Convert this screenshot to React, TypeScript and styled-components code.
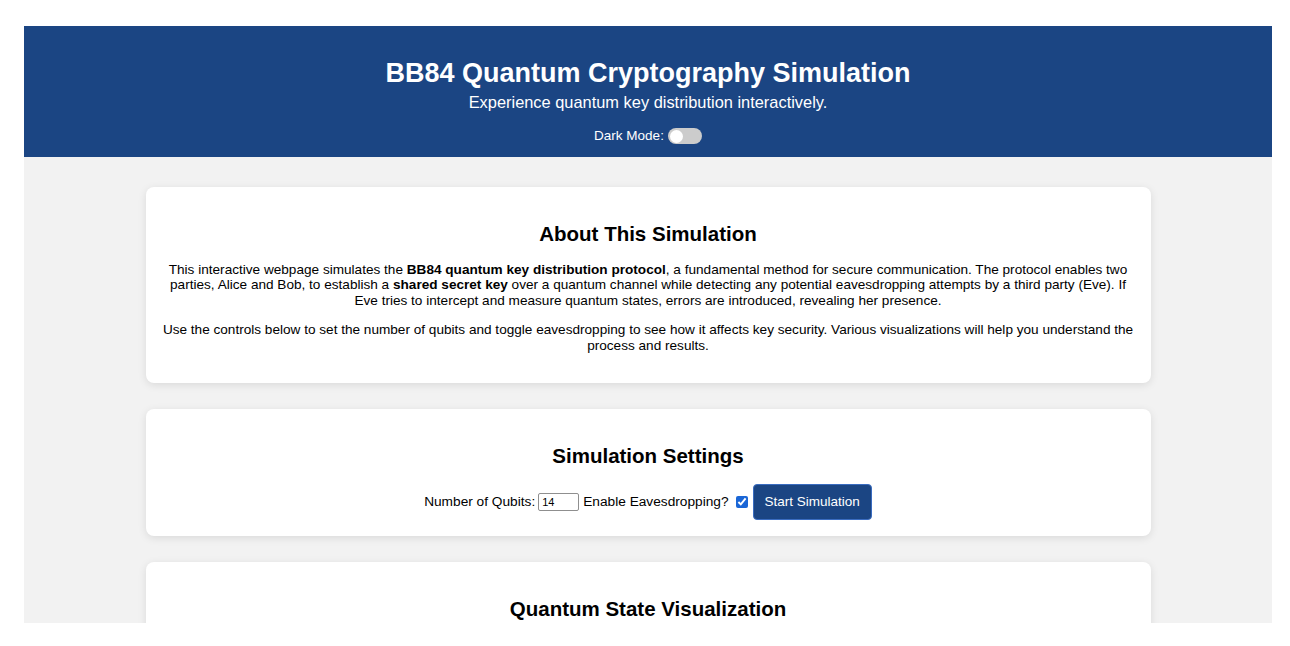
import React from "react";
import styled, { createGlobalStyle } from "styled-components";

const Global = createGlobalStyle`
  html, body { margin: 0; padding: 0; background: #ffffff; }
  body { font-family: "Liberation Sans", Arial, sans-serif; color: #000; }
`;

const Outer = styled.div`
  padding: 26px 18px 23px 24px;
  background: #fff;
`;

const Frame = styled.div`
  height: 597px;
  overflow: hidden;
  background: #f2f2f2;
  display: flex;
  flex-direction: column;
`;

const Header = styled.header`
  background: #1b4583;
  color: #fff;
  text-align: center;
  padding: 32px 0 12px;
  display: flex;
  flex-direction: column;
  align-items: center;
`;

const Title = styled.h1`
  margin: 0;
  font-size: 27px;
  line-height: 30px;
  font-weight: 700;
`;

const Subtitle = styled.p`
  margin: 5px 0 0;
  font-size: 16.4px;
  line-height: 18px;
`;

const ModeRow = styled.label`
  margin-top: 16px;
  display: flex;
  align-items: center;
  gap: 4px;
  font-size: 13.5px;
  line-height: 18px;
`;

const Toggle = styled.span`
  width: 34px;
  height: 16px;
  border-radius: 8px;
  background: #cccccc;
  display: flex;
  align-items: center;
  padding: 0 2px;
  box-sizing: border-box;
`;

const Knob = styled.span`
  width: 13px;
  height: 13px;
  border-radius: 50%;
  background: #fff;
`;

const Main = styled.main`
  padding: 30px 0 0;
  display: flex;
  flex-direction: column;
  align-items: center;
  gap: 26px;
`;

const Card = styled.section`
  width: 1005px;
  box-sizing: border-box;
  background: #fff;
  border-radius: 8px;
  box-shadow: 0 2px 8px rgba(0, 0, 0, 0.1);
  padding: 16px 16px;
  text-align: center;
`;

const CardTitle = styled.h2`
  margin: 19px 0 16px;
  font-size: 20.5px;
  line-height: 23.5px;
  font-weight: 700;
`;

const Para = styled.p`
  margin: 0 0 13.5px;
  font-size: 13.6px;
  line-height: 15.8px;
`;

const Controls = styled.div`
  margin-top: 1.5px;
  display: flex;
  justify-content: center;
  align-items: center;
  font-size: 13.7px;
  height: 36px;
`;

const NumInput = styled.input`
  width: 41px;
  height: 18px;
  box-sizing: border-box;
  margin: 0 4px 0 3px;
  border: 1px solid #8f8f8f;
  border-radius: 2px;
  font-family: "Liberation Sans", Arial, sans-serif;
  font-size: 11px;
  padding: 0 3px;
`;

const Check = styled.input`
  width: 12px;
  height: 12px;
  margin: 0 5px 0 7px;
  accent-color: #1a66d6;
`;

const StartButton = styled.button`
  height: 36px;
  padding: 0 11px;
  background: #1b4583;
  color: #fff;
  border: 1px solid #3a6cc0;
  border-radius: 4px;
  font-family: "Liberation Sans", Arial, sans-serif;
  font-size: 13.5px;
  cursor: pointer;
`;

export default function App() {
  return (
    <>
      <Global />
      <Outer>
        <Frame>
          <Header>
            <Title>BB84 Quantum Cryptography Simulation</Title>
            <Subtitle>Experience quantum key distribution interactively.</Subtitle>
            <ModeRow>
              Dark Mode:
              <Toggle>
                <Knob />
              </Toggle>
            </ModeRow>
          </Header>
          <Main>
            <Card>
              <CardTitle>About This Simulation</CardTitle>
              <Para>
                This interactive webpage simulates the <b>BB84 quantum key distribution protocol</b>, a
                fundamental method for secure communication. The protocol enables two parties, Alice and
                Bob, to establish a <b>shared secret key</b> over a quantum channel while detecting any
                potential eavesdropping attempts by a third party (Eve). If Eve tries to intercept and
                measure quantum states, errors are introduced, revealing her presence.
              </Para>
              <Para>
                Use the controls below to set the number of qubits and toggle eavesdropping to see how it
                affects key security. Various visualizations will help you understand the process and
                results.
              </Para>
            </Card>
            <Card>
              <CardTitle>Simulation Settings</CardTitle>
              <Controls>
                Number of Qubits:
                <NumInput type="number" defaultValue={14} />
                Enable Eavesdropping?
                <Check type="checkbox" defaultChecked />
                <StartButton>Start Simulation</StartButton>
              </Controls>
            </Card>
            <Card>
              <CardTitle>Quantum State Visualization</CardTitle>
              <Para>&nbsp;</Para>
              <Para>&nbsp;</Para>
            </Card>
          </Main>
        </Frame>
      </Outer>
    </>
  );
}
